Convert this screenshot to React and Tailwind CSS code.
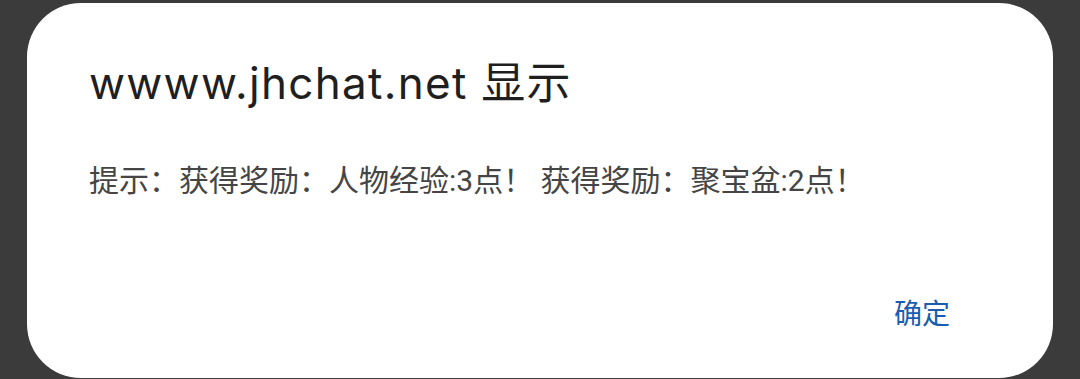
export default function App() {
  return (
    <div className="w-[1080px] h-[379px] bg-[#3b3b3b] overflow-hidden pl-[27px] pt-[3px]">
      <div className="w-[1026px] h-[375px] bg-white rounded-[54px] flex flex-col pl-[62px] pr-[103px] pt-[54px] font-['Noto_Sans_CJK_SC',sans-serif]">
        <div className="h-[52px] leading-[52px] text-[44px] tracking-[1.3px] text-[#1f1f1f] whitespace-nowrap font-['Inter','Noto_Sans_CJK_SC',sans-serif]">
          wwww.jhchat.net 显示
        </div>
        <div className="mt-[52px] h-[40px] leading-[40px] text-[30px] text-[#454545] whitespace-nowrap font-['Roboto','Noto_Sans_CJK_SC',sans-serif]">
          提示：获得奖励：人物经验:3点！ 获得奖励：聚宝盆:2点！
        </div>
        <div className="mt-[93px] flex justify-end">
          <button className="h-[36px] leading-[36px] text-[28px] text-[#1a5db0] font-['Noto_Sans_CJK_SC',sans-serif]">
            确定
          </button>
        </div>
      </div>
    </div>
  );
}
